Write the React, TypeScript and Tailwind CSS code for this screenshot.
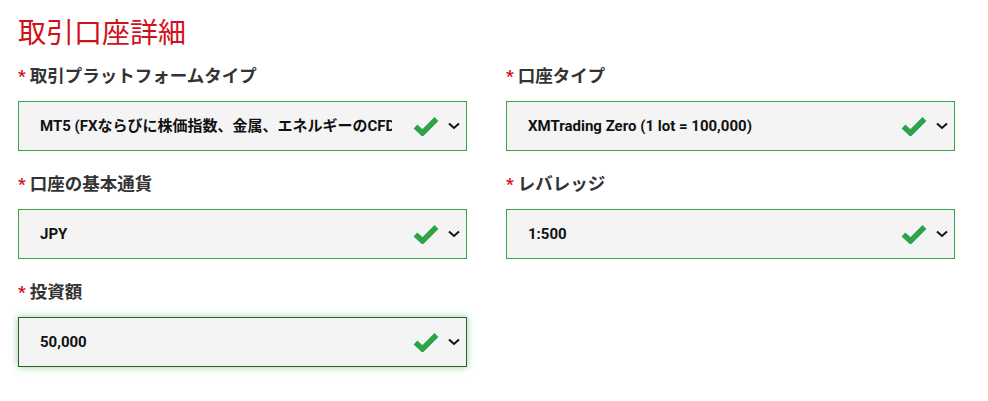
import React from 'react';

const FONT = '"Roboto", "Noto Sans CJK JP", sans-serif';

type Field = {
  label: string;
  value: string;
  focused?: boolean;
};

const FIELDS: Field[] = [
  { label: '取引プラットフォームタイプ', value: 'MT5 (FXならびに株価指数、金属、エネルギーのCFD)' },
  { label: '口座タイプ', value: 'XMTrading Zero (1 lot = 100,000)' },
  { label: '口座の基本通貨', value: 'JPY' },
  { label: 'レバレッジ', value: '1:500' },
  { label: '投資額', value: '50,000', focused: true },
];

function Check() {
  return (
    <svg width="26" height="20" viewBox="0 0 26 20" className="shrink-0">
      <path d="M2.5 10.5 L9.5 17 L23.5 3" fill="none" stroke="#2ea44a" strokeWidth="5.5" strokeLinejoin="miter" />
    </svg>
  );
}

function Chevron() {
  return (
    <svg width="12" height="8" viewBox="0 0 12 8" className="shrink-0">
      <path d="M1 1.5 L6 6 L11 1.5" fill="none" stroke="#111" strokeWidth="2" />
    </svg>
  );
}

function SelectField({ field }: { field: Field }) {
  return (
    <div className="flex flex-col">
      <label className="flex h-[26px] items-center text-[17.5px] font-bold leading-[26px] text-[#333]">
        <span className="mr-[4px] text-[17px] text-[#d0111b]">*</span>
        {field.label}
      </label>
      <div
        className={
          field.focused
            ? 'mt-[12px] flex h-[50px] items-center border border-[#2b5e2b] bg-[#f4f4f4] pl-[21px] pr-[6px] shadow-[0_0_7px_rgba(70,170,60,0.55)]'
            : 'mt-[12px] flex h-[50px] items-center border border-[#3aa545] bg-[#f4f4f4] pl-[21px] pr-[6px]'
        }
      >
        <span className="w-[352px] overflow-hidden whitespace-nowrap text-[15px] font-bold text-[#111]">
          {field.value}
        </span>
        <div className="ml-auto flex items-center gap-[9px]">
          <Check />
          <Chevron />
        </div>
      </div>
    </div>
  );
}

export default function App() {
  return (
    <div className="h-[401px] w-[988px] bg-white pl-[18px] pt-[14px]" style={{ fontFamily: FONT }}>
      <h1 className="h-[40px] text-[28px] font-normal leading-[40px] text-[#d0111b]">取引口座詳細</h1>
      <div className="mt-[9px] grid w-[937px] grid-cols-2 gap-x-[39px] gap-y-[20px]">
        {FIELDS.map((f) => (
          <SelectField key={f.label} field={f} />
        ))}
      </div>
    </div>
  );
}
